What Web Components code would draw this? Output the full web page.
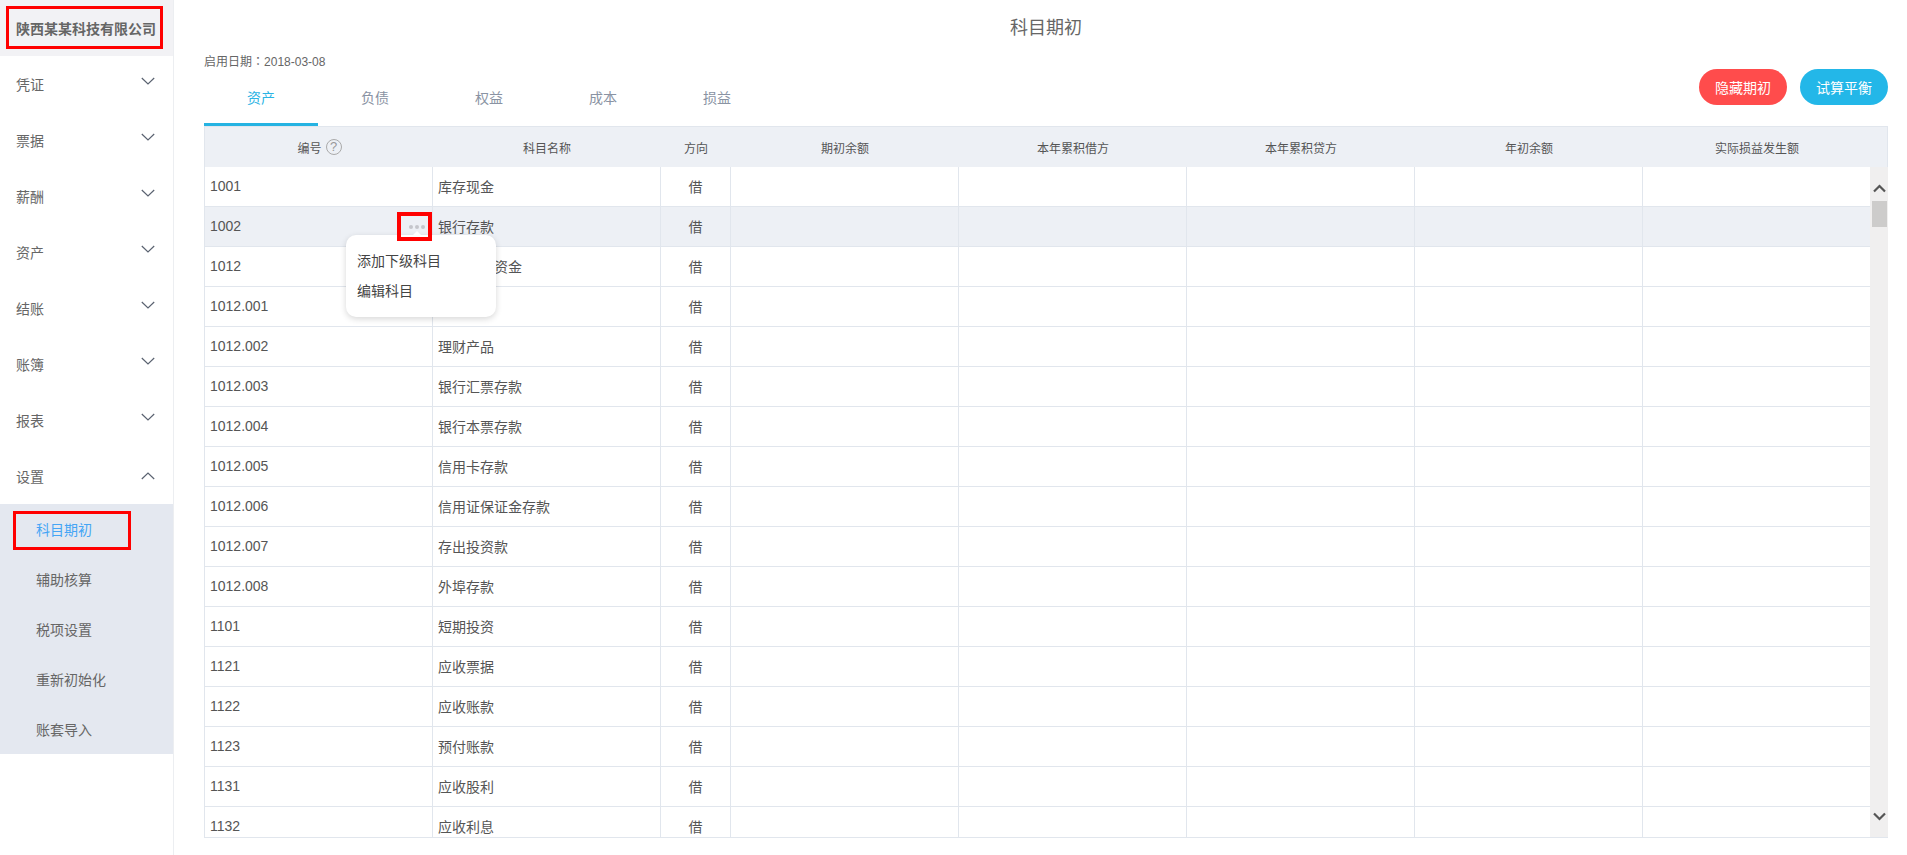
<!DOCTYPE html>
<html><head><meta charset="utf-8">
<style>
html,body{margin:0;padding:0;height:100%;background:#fff;overflow:hidden}
body{font-family:"Liberation Sans","Noto Sans CJK SC",sans-serif;color:#555;display:flex;height:855px}
</style></head><body>
<app-sidebar>
  <nav-group label="凭证"></nav-group>
  <nav-group label="票据"></nav-group>
  <nav-group label="薪酬"></nav-group>
  <nav-group label="资产"></nav-group>
  <nav-group label="结账"></nav-group>
  <nav-group label="账簿"></nav-group>
  <nav-group label="报表"></nav-group>
  <nav-group label="设置" open>
    <nav-item active>科目期初</nav-item>
    <nav-item>辅助核算</nav-item>
    <nav-item>税项设置</nav-item>
    <nav-item>重新初始化</nav-item>
    <nav-item>账套导入</nav-item>
  </nav-group>
</app-sidebar>
<app-main></app-main>
<script>
function def(name, css, html, init){
  customElements.define(name, class extends HTMLElement{
    constructor(){super();const s=this.attachShadow({mode:'open'});s.innerHTML='<style>'+css+'</style>'+html;}
    connectedCallback(){ if(init) init.call(this,this.shadowRoot); }
  });
}
const chev=(up)=>`<svg width="14" height="8" viewBox="0 0 14 8" fill="none" stroke="#5a6270" stroke-width="1.2"><path d="${up?'M0.8 7L7 1L13.2 7':'M0.8 1L7 7L13.2 1'}"/></svg>`;

def('app-sidebar',`
:host{display:block;flex:none;width:174px;box-sizing:border-box;height:855px;border-right:1px solid #eceef1;background:#fff}
.co{height:56px;background:#f2f2f5;display:flex;align-items:center;position:relative;padding-left:16px;font-size:14px;font-weight:700;color:#666;white-space:nowrap}
.mark{position:absolute;left:6px;top:6px;width:151px;height:37px;border:3px solid #f00}
`,`<div class="co"><span>陕西某某科技有限公司</span><i class="mark"></i></div><slot></slot>`);

def('nav-group',`
:host{display:block}
.h{height:56px;display:flex;align-items:center;justify-content:space-between;padding:0 18px 0 16px;font-size:14px;color:#666}
.h svg{position:relative;top:-3px}
.sub{background:#e4e8f0}
`,`<div class="h"><span class="t"></span><span class="c"></span></div><div class="sub"><slot></slot></div>`,function(s){
  s.querySelector('.t').textContent=this.getAttribute('label');
  const open=this.hasAttribute('open');
  s.querySelector('.c').innerHTML=chev(open);
  s.querySelector('.c').style.display='flex';
  if(open) s.querySelector('svg').style.top='0';
});

def('nav-item',`
:host{display:flex;align-items:center;height:50px;padding-left:36px;font-size:14px;color:#666;position:relative}
:host([active]){color:#45a5f5}
.mark{display:none;position:absolute;left:13px;top:7px;width:112px;height:33px;border:3px solid #f00}
:host([active]) .mark{display:block}
`,`<slot></slot><i class="mark"></i>`);

def('app-main',`
:host{flex:1;display:block;box-sizing:border-box;padding:0 19px 0 30px;min-width:0}
h1{margin:0;height:56px;line-height:57px;text-align:center;font-size:18px;font-weight:400;color:#666}
.date{font-size:12px;line-height:12px;height:12px;color:#666;margin-top:-1px}
.date b{font-weight:400;font-family:"Noto Sans CJK TC",sans-serif}
.bar{display:flex;justify-content:space-between;height:59px}
.btns{display:flex;gap:13px;padding-top:2px}
`,`<h1>科目期初</h1><div class="date">启用日期<b>：</b>2018-03-08</div>
<div class="bar"><acct-tabs></acct-tabs><div class="btns"><pill-button color="#ff4c4c">隐藏期初</pill-button><pill-button color="#23b7e8">试算平衡</pill-button></div></div>
<acct-table></acct-table>`);

def('pill-button',`
:host{display:flex;align-items:center;justify-content:center;width:88px;height:36px;border-radius:18px;color:#fff;font-size:14px;background:var(--c)}
`,`<slot></slot>`,function(){this.style.setProperty('--c',this.getAttribute('color'));});

def('acct-tabs',`
:host{display:flex;height:59px}
span{width:114px;height:59px;box-sizing:border-box;display:flex;align-items:center;justify-content:center;font-size:14px;color:#8a93a3;padding-top:4px;border-bottom:3px solid transparent}
.on{color:#2bb4e4;border-bottom-color:#25b3e2}
`,['资产','负债','权益','成本','损益'].map((t,i)=>`<span class="${i?'':'on'}">${t}</span>`).join(''));

const rows=[['1001','库存现金'],['1002','银行存款'],['1012','其他货币资金'],['1012.001','微信支付'],['1012.002','理财产品'],['1012.003','银行汇票存款'],['1012.004','银行本票存款'],['1012.005','信用卡存款'],['1012.006','信用证保证金存款'],['1012.007','存出投资款'],['1012.008','外埠存款'],['1101','短期投资'],['1121','应收票据'],['1122','应收账款'],['1123','预付账款'],['1131','应收股利'],['1132','应收利息']];
const heads=['本年累积借方','本年累积贷方','年初余额','实际损益发生额'];
def('acct-table',`
:host{display:block;position:relative;width:1684px}
.row{display:grid;box-sizing:border-box}
.head{height:41px;background:#edf0f5;border:solid #e1e6ed;border-width:1px 1px 0 1px;width:1684px;font-size:12px;color:#555;grid-template-columns:227px 228px 70px repeat(5,228px)}
.head div{display:flex;align-items:center;justify-content:center;gap:4px;padding-left:2px}
.bodyw{position:relative;height:671px;width:1684px;box-sizing:border-box;border:solid #e1e6ed;border-width:0 0 1px 1px;overflow:hidden;display:flex}
.rows{flex:none;width:1665px}
.b{height:40px;border-bottom:1px solid #e1e6ed;grid-template-columns:228px 228px 70px repeat(5,228px);font-size:14px;color:#555;width:1666px}
.b>div{border-right:1px solid #e1e6ed;display:flex;align-items:center;box-sizing:border-box;padding-bottom:1px}
.b>div:last-child{border-right:0}
.b>.n{padding-left:5px}
.b>.d{justify-content:center}
.b.hov{background:#edf0f5}
.sb{position:absolute;right:0;top:0;width:18px;height:100%;background:#f0efef;z-index:1}
.sb .th{position:absolute;left:2px;top:34px;width:15px;height:26px;background:#cdcccb}
.sb svg{position:absolute;left:3px}
.q{width:14px;height:14px;border:1px solid #aaa;border-radius:50%;color:#999;font-size:13px;line-height:14px;text-align:center}
.dots{position:absolute;left:193px;top:86px;width:35px;height:29px;box-sizing:border-box;border:4px solid #f00;padding-left:5px;z-index:3;display:flex;align-items:center;justify-content:center;gap:2px}
.dots i{width:4px;height:4px;border-radius:50%;background:#c4c6cb}
.pop{position:absolute;left:142px;top:109px;width:150px;height:82px;background:#fff;border-radius:10px;box-shadow:0 2px 6px rgba(0,0,0,.16);z-index:2;box-sizing:border-box;padding:11px 0 0 11px;font-size:14px;color:#444;line-height:30px}
.pop:before{content:"";position:absolute;left:66px;top:-4px;width:0;height:0;border:5px solid transparent;border-top:0;border-bottom-color:#fff}
`,`<div class="row head"><div>编号<span class="q">?</span></div><div>科目名称</div><div>方向</div><div>期初余额</div>${heads.map(h=>`<div>${h}</div>`).join('')}</div>
<div class="bodyw"><div class="rows">${rows.map((r,i)=>`<div class="row b${i==1?' hov':''}"><div class="n">${r[0]}</div><div class="n">${r[1]}</div><div class="d">借</div><div></div><div></div><div></div><div></div><div></div></div>`).join('')}</div>
<div class="sb"><svg style="top:17px" width="13" height="9" viewBox="0 0 13 9" fill="none" stroke="#555" stroke-width="2.2"><path d="M1 7.5L6.5 2L12 7.5"/></svg><div class="th"></div><svg style="bottom:16px" width="13" height="9" viewBox="0 0 13 9" fill="none" stroke="#555" stroke-width="2.2"><path d="M1 1.5L6.5 7L12 1.5"/></svg></div></div>
<div class="dots"><i></i><i></i><i></i></div>
<div class="pop"><div>添加下级科目</div><div>编辑科目</div></div>`);
</script>
</body></html>
